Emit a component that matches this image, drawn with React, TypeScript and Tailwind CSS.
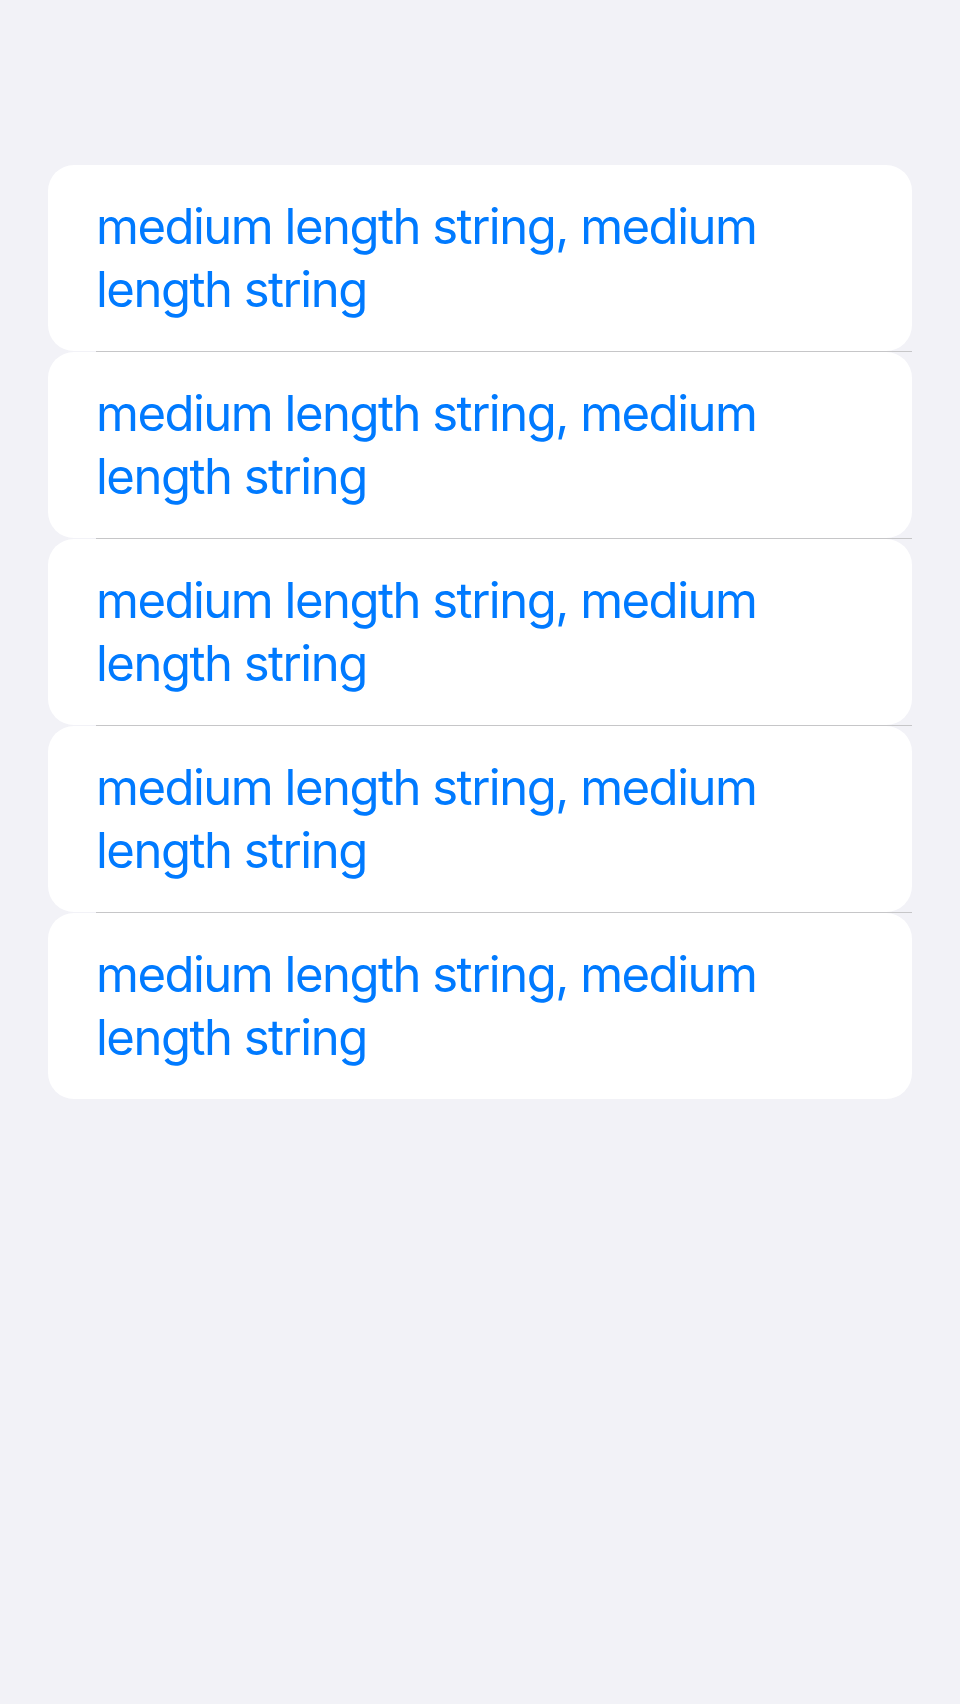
import React from 'react';

const rows = [1, 2, 3, 4, 5];

const App: React.FC = () => {
  return (
    <div
      className="min-h-[1704px] w-[960px] bg-[#f2f2f7] pt-[165px]"
      style={{ fontFamily: 'Inter, "Noto Sans", sans-serif' }}
    >
      <div className="flex flex-col px-[48px]">
        {rows.map((row, i) => (
          <div key={row} className="flex flex-col">
            <div className="h-[186px] rounded-[26px] bg-white pl-[48px] pr-[48px] flex items-center">
              <p className="text-[49px] leading-[63px] text-[#007aff] tracking-[-1.5px]">
                medium length string, medium length string
              </p>
            </div>
            {i < rows.length - 1 && (
              <div className="h-px ml-[48px] bg-[#c6c6c8]" />
            )}
          </div>
        ))}
      </div>
    </div>
  );
};

export default App;
